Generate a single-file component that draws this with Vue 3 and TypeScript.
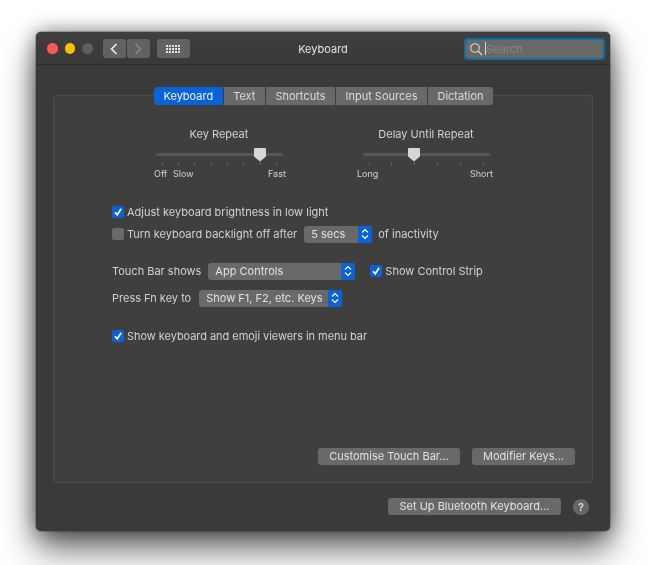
<script setup lang="ts">
interface Slider {
  title: string
  thumb: number
  ticks: number[]
  labels: { text: string; left: number }[]
}

const tabs = ['Keyboard', 'Text', 'Shortcuts', 'Input Sources', 'Dictation']

const sliders: Slider[] = [
  {
    title: 'Key Repeat',
    thumb: 104,
    ticks: [8, 24, 40, 57, 73, 89, 106, 122],
    labels: [
      { text: 'Off', left: 0 },
      { text: 'Slow', left: 19 },
      { text: 'Fast', left: 114 }
    ]
  },
  {
    title: 'Delay Until Repeat',
    thumb: 51,
    ticks: [12, 34, 57, 80, 103, 126],
    labels: [
      { text: 'Long', left: 0 },
      { text: 'Short', left: 113 }
    ]
  }
]

const dots = Array.from({ length: 15 })
</script>

<template>
  <div class="page">
    <div class="window">
      <header class="titlebar">
        <div class="lights">
          <span class="light red"></span>
          <span class="light yellow"></span>
          <span class="light gray"></span>
        </div>
        <div class="nav">
          <button class="nav-btn">
            <svg width="10" height="14" viewBox="0 0 10 14"><path d="M7.500 2 2.500 7l5 5" fill="none" stroke="#efefef" stroke-width="1.600" /></svg>
          </button>
          <button class="nav-btn">
            <svg width="10" height="14" viewBox="0 0 10 14"><path d="M2.500 2l5 5-5 5" fill="none" stroke="#8c8c8c" stroke-width="1.500" /></svg>
          </button>
        </div>
        <button class="grid-btn">
          <span class="dots"><i v-for="(_, i) in dots" :key="i"></i></span>
        </button>
        <span class="win-title">Keyboard</span>
        <div class="search">
          <svg width="14" height="14" viewBox="0 0 14 14"><circle cx="6" cy="6" r="4.300" fill="none" stroke="#d8d8d8" stroke-width="1.100" /><path d="M9.200 9.200 13 13" stroke="#d8d8d8" stroke-width="1.300" /></svg>
          <span class="caret"></span>
          <span class="placeholder">Search</span>
        </div>
      </header>

      <section class="panel">
        <nav class="tabs">
          <span v-for="(tab, i) in tabs" :key="tab" :class="['tab', { active: i === 0 }]">{{ tab }}</span>
        </nav>

        <div class="sliders">
          <div v-for="s in sliders" :key="s.title" class="slider">
            <div class="slider-title">{{ s.title }}</div>
            <div class="track">
              <svg class="thumb" :style="{ left: s.thumb - 7 + 'px' }" width="14" height="15" viewBox="0 0 14 15">
                <path d="M2 1h10a1 1 0 0 1 1 1v7.500L7 14.500 1 9.500V2a1 1 0 0 1 1-1z" fill="#d6d6d6" />
              </svg>
            </div>
            <div class="ticks">
              <i v-for="t in s.ticks" :key="t" :style="{ left: t + 'px' }"></i>
            </div>
            <div class="scale">
              <span v-for="l in s.labels" :key="l.text" :style="{ left: l.left + 'px' }">{{ l.text }}</span>
            </div>
          </div>
        </div>

        <div class="options">
          <div class="row row-adjust">
            <span class="check on"><svg width="10" height="10" viewBox="0 0 10 10"><path d="M2 5.200 4.200 7.800 8.200 1.800" fill="none" stroke="#fff" stroke-width="1.700" /></svg></span>
            <span>Adjust keyboard brightness in low light</span>
          </div>
          <div class="row row-backlight">
            <span class="check"></span>
            <span>Turn keyboard backlight off after</span>
            <div class="select secs">
              <span class="select-text">5 secs</span>
              <span class="stepper"><svg width="8" height="12" viewBox="0 0 8 12"><path d="M1 4.500 4 1.500 7 4.500M1 7.500 4 10.500 7 7.500" fill="none" stroke="#fff" stroke-width="1.200" /></svg></span>
            </div>
            <span>of inactivity</span>
          </div>
          <div class="row row-touch">
            <span>Touch Bar shows</span>
            <div class="select controls">
              <span class="select-text">App Controls</span>
              <span class="stepper"><svg width="8" height="12" viewBox="0 0 8 12"><path d="M1 4.500 4 1.500 7 4.500M1 7.500 4 10.500 7 7.500" fill="none" stroke="#fff" stroke-width="1.200" /></svg></span>
            </div>
            <span class="check on strip"><svg width="10" height="10" viewBox="0 0 10 10"><path d="M2 5.200 4.200 7.800 8.200 1.800" fill="none" stroke="#fff" stroke-width="1.700" /></svg></span>
            <span>Show Control Strip</span>
          </div>
          <div class="row row-fn">
            <span>Press Fn key to</span>
            <div class="select fn">
              <span class="select-text">Show F1, F2, etc. Keys</span>
              <span class="stepper"><svg width="8" height="12" viewBox="0 0 8 12"><path d="M1 4.500 4 1.500 7 4.500M1 7.500 4 10.500 7 7.500" fill="none" stroke="#fff" stroke-width="1.200" /></svg></span>
            </div>
          </div>
          <div class="row row-viewers">
            <span class="check on"><svg width="10" height="10" viewBox="0 0 10 10"><path d="M2 5.200 4.200 7.800 8.200 1.800" fill="none" stroke="#fff" stroke-width="1.700" /></svg></span>
            <span>Show keyboard and emoji viewers in menu bar</span>
          </div>
        </div>

        <div class="panel-actions">
          <button class="btn customise">Customise Touch Bar...</button>
          <button class="btn modifier">Modifier Keys...</button>
        </div>
      </section>

      <footer class="footer">
        <button class="btn bluetooth">Set Up Bluetooth Keyboard...</button>
        <span class="help">?</span>
      </footer>
    </div>
  </div>
</template>

<style>
html,
body {
  margin: 0;
  background: #fff;
}
</style>

<style scoped>
.page {
  width: 648px;
  height: 565px;
  padding: 32px 0 0 36px;
  box-sizing: border-box;
  overflow: hidden;
  font-family: Inter, 'Noto Sans', sans-serif;
  font-size: 11px;
  color: #d2d2d2;
}

.window {
  width: 574px;
  height: 499px;
  background: #3a3a39;
  border-radius: 5px;
  box-shadow: 0 0 0 1px rgba(0, 0, 0, 0.2), 0 0 20px rgba(0, 0, 0, 0.45), 0 18px 34px rgba(0, 0, 0, 0.6);
  display: flex;
  flex-direction: column;
  filter: blur(0.5px);
}

button {
  border: 0;
  padding: 0;
  font: inherit;
  color: inherit;
}

.titlebar {
  height: 33px;
  flex: none;
  box-sizing: border-box;
  padding: 1px 0 0 11px;
  border-bottom: 1px solid #2a2a2a;
  border-radius: 5px 5px 0 0;
  background: linear-gradient(#403f3f, #393938);
  display: flex;
  align-items: center;
  position: relative;
}

.lights {
  display: flex;
  gap: 7px;
}

.light {
  width: 10.500px;
  height: 10.500px;
  border-radius: 50%;
}

.red { background: #fa5a52; }
.yellow { background: #fcc000; }
.gray { background: #5f5f5e; }

.nav {
  display: flex;
  gap: 1px;
  margin-left: 10px;
}

.nav-btn {
  width: 23px;
  height: 19px;
  background: #626262;
  border-radius: 3px;
  display: flex;
  align-items: center;
  justify-content: center;
}

.grid-btn {
  width: 33px;
  height: 19px;
  margin-left: 7px;
  background: #626262;
  border-radius: 3px;
  display: flex;
  align-items: center;
  justify-content: center;
}

.dots {
  display: grid;
  grid-template-columns: repeat(5, 2px);
  gap: 1px;
}

.dots i {
  width: 2px;
  height: 2px;
  background: #e4e4e4;
}

.win-title {
  position: absolute;
  left: 0;
  right: 0;
  top: 10px;
  text-align: center;
  line-height: 15px;
  color: #e4e4e4;
  pointer-events: none;
}

.search {
  margin-left: auto;
  margin-right: 5px;
  width: 134px;
  height: 18px;
  background: #686867;
  border: 2px solid #0a6ea8;
  border-radius: 4px;
  display: flex;
  align-items: center;
  padding-left: 3px;
}

.caret {
  width: 1px;
  height: 13px;
  background: #d8d8d8;
  margin-left: 2px;
}

.placeholder {
  color: #858585;
}

.panel {
  margin: 30px 17px 0;
  height: 388px;
  flex: none;
  box-sizing: border-box;
  background: #3f3f3e;
  border: 1px solid #4d4d4c;
  border-radius: 4px;
  display: flex;
  flex-direction: column;
}

.tabs {
  display: flex;
  height: 18px;
  margin: -9px 0 0 100px;
  width: 339px;
  gap: 1px;
}

.tab {
  background: #696969;
  line-height: 18px;
  padding: 0 8px;
  color: #dcdcdc;
  flex: auto;
  text-align: center;
  white-space: nowrap;
}

.tab:first-child { border-radius: 3px 0 0 3px; }
.tab:last-child { border-radius: 0 3px 3px 0; }

.tab.active {
  background: #0a62d8;
  color: #eef4ff;
}

.sliders {
  display: flex;
  margin: 22px 0 0 100px;
  gap: 71px;
}

.slider {
  width: 132px;
}

.slider + .slider {
  width: 136px;
}

.slider-title {
  text-align: center;
  line-height: 15px;
  width: 130px;
}

.slider + .slider .slider-title {
  width: 138px;
}

.track {
  position: relative;
  height: 3px;
  margin: 11px 0 0 2px;
  width: 127px;
  background: #565655;
  border-radius: 2px;
}

.slider + .slider .track {
  margin-left: 6px;
}

.thumb {
  position: absolute;
  top: -6px;
}

.ticks {
  position: relative;
  height: 3px;
  margin-top: 6px;
}

.ticks i {
  position: absolute;
  top: 0;
  width: 1px;
  height: 3px;
  background: #666665;
}

.scale {
  position: relative;
  height: 13px;
  margin-top: 2px;
  font-size: 9px;
  line-height: 13px;
}

.scale span {
  position: absolute;
  top: 0;
}

.options {
  margin: 23px 0 0 58px;
}

.row {
  display: flex;
  align-items: center;
  height: 18px;
  white-space: nowrap;
}

.row-backlight { margin-top: 4px; }
.row-touch { margin-top: 19px; }
.row-fn { margin-top: 9px; }
.row-viewers { margin-top: 20px; letter-spacing: -0.05px; }

.check {
  width: 12px;
  height: 12px;
  border-radius: 2px;
  background: #6a6a69;
  margin-right: 3px;
  flex: none;
  display: flex;
  align-items: center;
  justify-content: center;
}

.check.on {
  background: #0a62d8;
}

.check.strip {
  margin-left: 15px;
}

.select {
  height: 17px;
  background: #696969;
  border-radius: 3px;
  display: flex;
  justify-content: space-between;
  color: #e2e2e2;
  line-height: 17px;
  box-sizing: border-box;
  padding-left: 7px;
  overflow: hidden;
}

.stepper {
  width: 14px;
  background: #0a62d8;
  display: flex;
  align-items: center;
  justify-content: center;
}

.secs { width: 68px; margin: 0 6px 0 7px; }
.controls { width: 147px; margin-left: 7px; }
.fn { width: 143px; margin-left: 8px; }

.panel-actions {
  margin-top: auto;
  margin-bottom: 17px;
  margin-right: 17px;
  display: flex;
  justify-content: flex-end;
  gap: 12px;
}

.btn {
  height: 17px;
  background: #696969;
  border-radius: 3px;
  color: #e2e2e2;
  line-height: 17px;
  text-align: center;
}

.customise { width: 142px; }
.modifier { width: 103px; }
.bluetooth { width: 173px; }

.footer {
  display: flex;
  justify-content: flex-end;
  align-items: center;
  margin: 15px 21px 0 0;
  gap: 12px;
}

.help {
  width: 16px;
  height: 16px;
  border-radius: 50%;
  background: #666;
  color: #ddd;
  text-align: center;
  line-height: 16px;
  font-size: 11px;
  font-weight: 600;
}
</style>
